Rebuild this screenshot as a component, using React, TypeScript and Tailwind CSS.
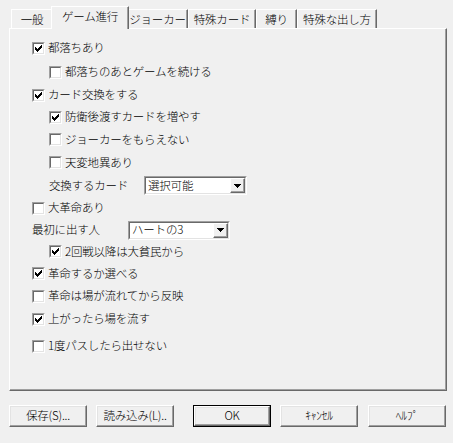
import React from "react";

const FONT = "font-['MS_UI_Gothic','Noto_Sans_CJK_JP',sans-serif]";

function CheckMark() {
  // classic 7x7 pixel tick
  const cols = [2, 3, 4, 3, 2, 1, 0];
  return (
    <svg width="7" height="7" viewBox="0 0 7 7" shapeRendering="crispEdges" className="block">
      {cols.map((y, x) => (
        <rect key={x} x={x} y={y} width="1" height="3" fill="#000" />
      ))}
    </svg>
  );
}

function Check({ checked }: { checked?: boolean }) {
  return (
    <span className="block w-[13px] h-[13px] shrink-0 border border-t-[#a0a0a0] border-l-[#a0a0a0] border-r-white border-b-white">
      <span className="flex w-full h-full items-center justify-center border border-t-[#696969] border-l-[#696969] border-r-[#e3e3e3] border-b-[#e3e3e3] bg-white">
        {checked && <CheckMark />}
      </span>
    </span>
  );
}

function Row({
  h,
  indent,
  checked,
  children,
}: {
  h: string;
  indent?: boolean;
  checked?: boolean;
  children: React.ReactNode;
}) {
  return (
    <div className={`flex items-center ${h} ${indent ? "pl-[17px]" : ""}`}>
      <Check checked={checked} />
      <span className="ml-[3px] whitespace-nowrap">{children}</span>
    </div>
  );
}

function Combo({ value, w }: { value: string; w: string }) {
  return (
    <div className={`${w} h-[19px] border border-t-[#a0a0a0] border-l-[#a0a0a0] border-r-white border-b-white`}>
      <div className="flex h-full border border-t-[#696969] border-l-[#696969] border-r-[#e3e3e3] border-b-[#e3e3e3] bg-white">
        <span className="flex-1 flex items-center pl-[2px] whitespace-nowrap">{value}</span>
        <span className="flex w-[15px] items-center justify-center bg-[#f0f0f0] border border-t-white border-l-white border-r-[#696969] border-b-[#696969] shadow-[inset_-1px_-1px_0_#a0a0a0]">
          <svg width="7" height="4" viewBox="0 0 7 4" shapeRendering="crispEdges">
            <path d="M0 0h7v1H0zM1 1h5v1H1zM2 2h3v1H2zM3 3h1v1H3z" fill="#000" />
          </svg>
        </span>
      </div>
    </div>
  );
}

function Button({ label, def }: { label: string; def?: boolean }) {
  return (
    <div className={`w-[78px] h-[22px] ${def ? "border border-black" : ""}`}>
      <div className="flex h-full items-center justify-center whitespace-nowrap bg-[#f0f0f0] border border-t-white border-l-white border-r-[#696969] border-b-[#696969] shadow-[inset_-1px_-1px_0_#a0a0a0,inset_1px_1px_0_#e3e3e3]">
        {label}
      </div>
    </div>
  );
}

const TABS = [
  { label: "一般", w: "w-[42px]" },
  { label: "ゲーム進行", w: "w-[78px]", active: true },
  { label: "ジョーカー", w: "w-[61px]" },
  { label: "特殊カード", w: "w-[68px]" },
  { label: "縛り", w: "w-[41px]" },
  { label: "特殊な出し方", w: "w-[80px]" },
];

export default function App() {
  return (
    <div className={`w-[453px] h-[443px] bg-[#f0f0f0] overflow-hidden text-[11.5px] font-light tracking-[-0.2px] leading-none text-black ${FONT}`}>
      {/* tab strip */}
      <div className="flex items-end h-[28px] pl-[11px]">
        {TABS.map((t) =>
          t.active ? (
            <div
              key={t.label}
              className={`relative z-10 -mx-[2px] -mb-[1px] h-[23px] ${t.w} flex items-start justify-center pt-[4px] whitespace-nowrap bg-[#f0f0f0] border-t border-l border-t-white border-l-white border-r border-r-[#696969] shadow-[inset_-1px_0_0_#a0a0a0]`}
            >
              {t.label}
            </div>
          ) : (
            <div
              key={t.label}
              className={`h-[19px] ${t.w} flex items-start justify-center pt-[4px] whitespace-nowrap bg-[#f0f0f0] border-t border-l border-t-white border-l-white border-r border-r-[#696969] shadow-[inset_-1px_0_0_#a0a0a0]`}
            >
              {t.label}
            </div>
          )
        )}
      </div>

      {/* tab page */}
      <div className="ml-[9px] w-[438px] h-[363px] border border-t-white border-l-white border-r-[#696969] border-b-[#696969] shadow-[inset_-1px_-1px_0_#a0a0a0] pt-[7px] pl-[22px]">
        <Row h="h-[24px]" checked>都落ちあり</Row>
        <Row h="h-[24px]" indent>都落ちのあとゲームを続ける</Row>
        <Row h="h-[22px]" checked>カード交換をする</Row>
        <Row h="h-[22px]" indent checked>防衛後渡すカードを増やす</Row>
        <Row h="h-[23px]" indent>ジョーカーをもらえない</Row>
        <Row h="h-[23px]" indent>天変地異あり</Row>
        <div className="flex items-center h-[23px] pl-[17px]">
          <span className="w-[95px] whitespace-nowrap">交換するカード</span>
          <Combo value="選択可能" w="w-[103px]" />
        </div>
        <Row h="h-[22px]">大革命あり</Row>
        <div className="flex items-center h-[22px]">
          <span className="w-[96px] whitespace-nowrap">最初に出す人</span>
          <Combo value="ハートの3" w="w-[102px]" />
        </div>
        <Row h="h-[21px]" indent checked>2回戦以降は大貧民から</Row>
        <Row h="h-[23px]" checked>革命するか選べる</Row>
        <Row h="h-[22px]">革命は場が流れてから反映</Row>
        <Row h="h-[24px]" checked>上がったら場を流す</Row>
        <Row h="h-[30px]">1度パスしたら出せない</Row>
      </div>

      {/* buttons */}
      <div className="flex mt-[14px] pl-[9px]">
        <Button label="保存(S)..." />
        <div className="ml-[9px]">
          <Button label="読み込み(L).." />
        </div>
        <div className="ml-[19px]">
          <Button label="OK" def />
        </div>
        <div className="ml-[9px]">
          <Button label="ｷｬﾝｾﾙ" />
        </div>
        <div className="ml-[10px]">
          <Button label="ﾍﾙﾌﾟ" />
        </div>
      </div>
    </div>
  );
}
